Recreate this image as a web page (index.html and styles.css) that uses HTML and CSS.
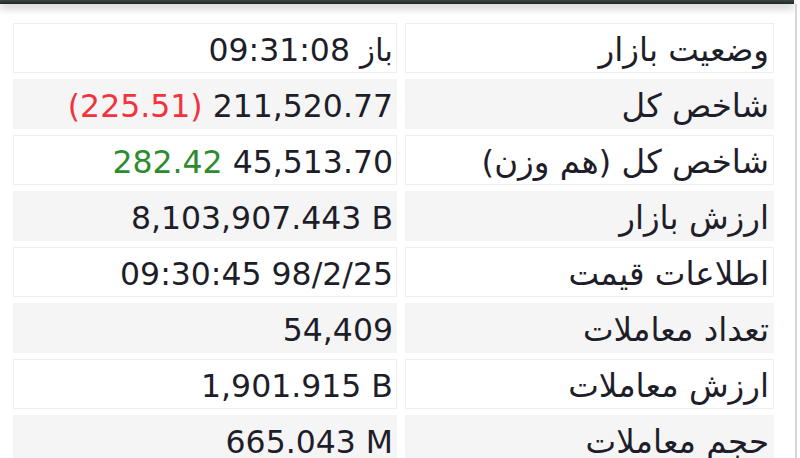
FILE: index.html
```html
<!DOCTYPE html>
<html lang="fa">
<head>
<meta charset="utf-8">
<link rel="stylesheet" href="styles.css">
</head>
<body>
<div class="page">
  <div class="topbar"></div>
  <div class="panel">
    <div class="grid" dir="rtl">
      <div class="cell label">وضعیت بازار</div>
      <div class="cell value" dir="ltr">09:31:08 <span class="fa">باز</span></div>

      <div class="cell label alt">شاخص کل</div>
      <div class="cell value alt" dir="ltr"><span class="neg">(225.51)</span> 211,520.77</div>

      <div class="cell label">شاخص کل (هم وزن)</div>
      <div class="cell value" dir="ltr"><span class="pos">282.42</span> 45,513.70</div>

      <div class="cell label alt">ارزش بازار</div>
      <div class="cell value alt" dir="ltr">8,103,907.443 B</div>

      <div class="cell label">اطلاعات قیمت</div>
      <div class="cell value" dir="ltr">09:30:45 98/2/25</div>

      <div class="cell label alt">تعداد معاملات</div>
      <div class="cell value alt" dir="ltr">54,409</div>

      <div class="cell label">ارزش معاملات</div>
      <div class="cell value" dir="ltr">1,901.915 B</div>

      <div class="cell label alt">حجم معاملات</div>
      <div class="cell value alt" dir="ltr">665.043 M</div>
    </div>
  </div>
</div>
</body>
</html>
```

FILE: styles.css
```css
html, body {
  margin: 0;
  padding: 0;
  background: #ffffff;
}
body {
  width: 800px;
  height: 458px;
  overflow: hidden;
  font-family: "DejaVu Sans", sans-serif;
  color: #1e1e2a;
}
.page {
  width: 800px;
  height: 458px;
}
.topbar {
  height: 4px;
  width: 794px;
  background: linear-gradient(#3b4844, #1f2623);
  box-shadow: 0 3px 9px rgba(0, 0, 0, 0.35);
}
.panel {
  width: 797px;
  height: 454px;
  border-right: 2px solid #d6d6d6;
  box-sizing: border-box;
  padding: 19px 0 0 13px;
}
.grid {
  display: grid;
  grid-template-columns: 369px 384px;
  column-gap: 8px;
  row-gap: 6px;
  width: 761px;
}
.cell {
  height: 50px;
  box-sizing: border-box;
  border: 1px solid #eeeeee;
  background: #ffffff;
  line-height: 50px;
  padding: 1px 3px 0 3px;
  text-align: right;
  white-space: nowrap;
  overflow: hidden;
}
.cell.alt {
  background: #f5f5f5;
  border-color: #f5f5f5;
}
.value {
  font-size: 31.5px;
}
.value .fa {
  font-size: 31px;
}
.label {
  font-size: 32.5px;
  padding-right: 4px;
}
.neg {
  color: #f2333d;
}
.pos {
  color: #2d8c2d;
}
```
